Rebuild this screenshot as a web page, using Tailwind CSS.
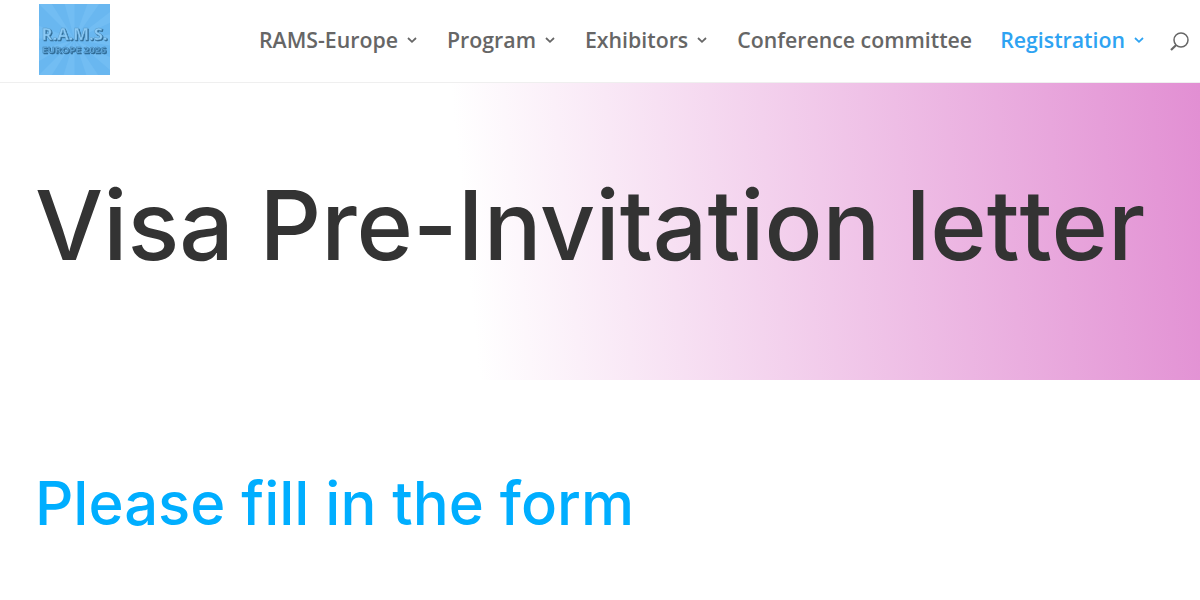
<!DOCTYPE html>
<html lang="en">
<head>
    <meta charset="UTF-8">
    <meta name="viewport" content="width=device-width, initial-scale=1.0">
    <title>Visa Pre-Invitation letter</title>
    <script src="https://cdn.jsdelivr.net/npm/@tailwindcss/browser@4"></script>
</head>
<body class="bg-white overflow-x-hidden">
    <!-- Header -->
    <header class="flex items-center justify-between h-[83px] pl-[39px] pr-[11px] border-b border-[#efefef]">
        <a href="#" class="block mb-[3px]">
            <svg width="71" height="71" viewBox="0 0 72 72" class="block">
                <rect width="72" height="72" fill="#69b7f0"/>
                <g fill="#72bdf3">
                    <path d="M36 36L0 0h13zM36 36L26 0h10zM36 36L49 0h12zM36 36L72 8v11zM36 36L72 31v11zM36 36L72 54v13zM36 36L60 72H48zM36 36L36 72H25zM36 36L13 72H0zM36 36L0 58V47zM36 36L0 35V22z"/>
                </g>
                <g font-family="Open Sans, sans-serif" font-weight="700" class="drop-shadow-[1px_1px_0.5px_#2d6791]">
                    <text x="2.5" y="37" font-size="17" textLength="67" lengthAdjust="spacingAndGlyphs" fill="#8ccaf5" stroke="#5a9cca" stroke-width=".5">R.A.M.S.</text>
                    <text x="3" y="50" font-size="9.5" textLength="65" lengthAdjust="spacingAndGlyphs" fill="#68aee0" stroke="#3d7baa" stroke-width=".4">EUROPE 2026</text>
                </g>
            </svg>
        </a>
        <nav class="flex items-center mb-[2px] font-['Open_Sans',sans-serif] text-[21.3px] leading-[30px] font-semibold text-[#666666] whitespace-nowrap">
            <a href="#" class="flex items-center mr-[30px]">
                <span>RAMS-Europe</span>
                <svg class="ml-[9px]" width="10" height="8" viewBox="0 0 10 8" fill="none" stroke="currentColor" stroke-width="1.8"><path d="M1 2l4 3.8L9 2"/></svg>
            </a>
            <a href="#" class="flex items-center mr-[30px]">
                <span>Program</span>
                <svg class="ml-[9px]" width="10" height="8" viewBox="0 0 10 8" fill="none" stroke="currentColor" stroke-width="1.8"><path d="M1 2l4 3.8L9 2"/></svg>
            </a>
            <a href="#" class="flex items-center mr-[30px]">
                <span>Exhibitors</span>
                <svg class="ml-[9px]" width="10" height="8" viewBox="0 0 10 8" fill="none" stroke="currentColor" stroke-width="1.8"><path d="M1 2l4 3.8L9 2"/></svg>
            </a>
            <a href="#" class="mr-[28px]">Conference committee</a>
            <a href="#" class="flex items-center mr-[26px] text-[#2ea3f2]">
                <span>Registration</span>
                <svg class="ml-[9px]" width="10" height="8" viewBox="0 0 10 8" fill="none" stroke="currentColor" stroke-width="1.8"><path d="M1 2l4 3.8L9 2"/></svg>
            </a>
            <button aria-label="Search" class="pt-[2px] text-[#666666]">
                <svg class="block" width="19" height="19" viewBox="0 0 19 19" fill="none" stroke="currentColor"><circle cx="11" cy="8" r="7" stroke-width="1.5"/><path d="M6.2 13L1 18" stroke-width="2.2"/></svg>
            </button>
        </nav>
    </header>

    <!-- Title banner -->
    <section class="h-[297px] pl-[35px] pt-[84px] bg-[linear-gradient(84.5deg,#ffffff_39%,#e28fd3_100%)]">
        <h1 class="font-['Inter',sans-serif] font-medium text-[96.2px] leading-[117px] text-[#333333] whitespace-nowrap">Visa Pre-Invitation let<span class="ml-[0.1px]">ter</span></h1>
    </section>

    <!-- Form -->
    <section class="pl-[35px] pt-[87px]">
        <h2 class="font-['Inter',sans-serif] font-medium text-[59.8px] leading-[72px] text-[#00aeff] whitespace-nowrap">Please fill in the form</h2>
    </section>
</body>
</html>
